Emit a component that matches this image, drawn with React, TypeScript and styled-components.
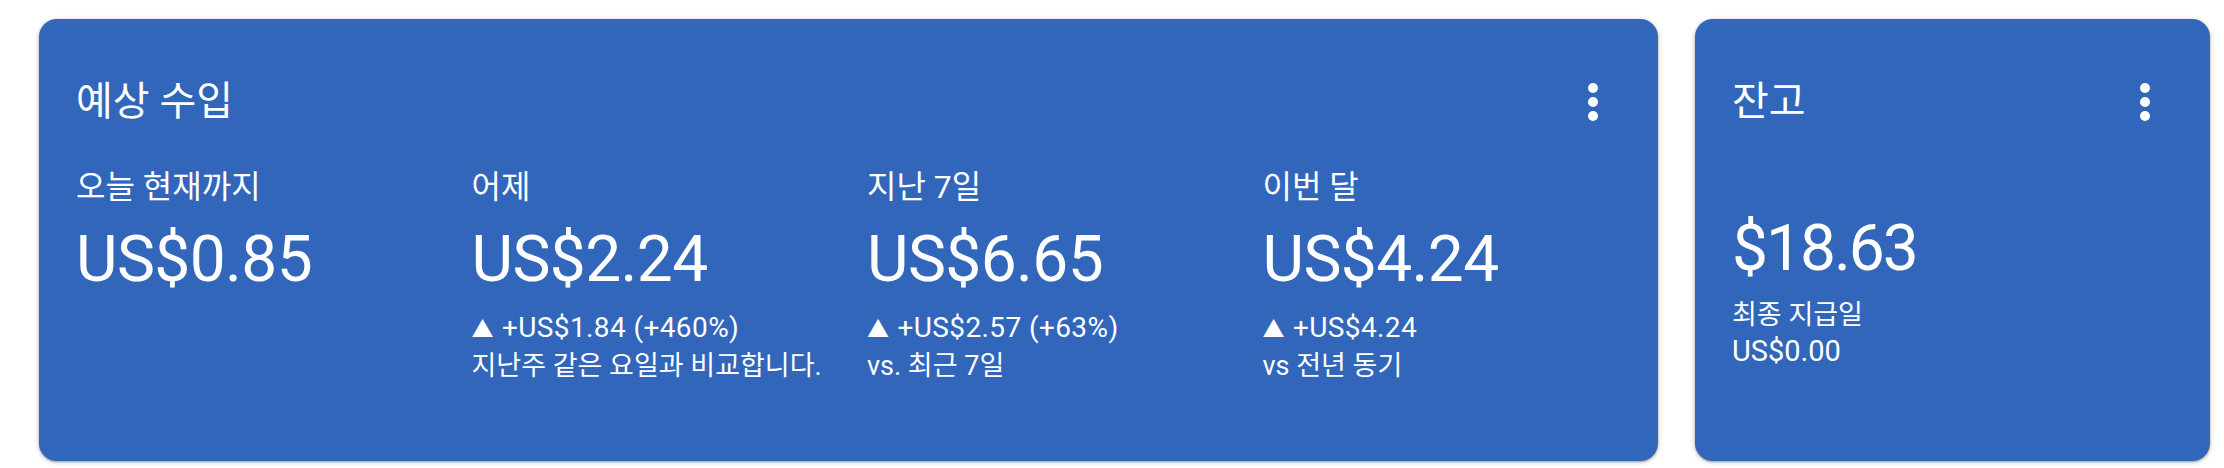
import React from "react";
import styled, { createGlobalStyle } from "styled-components";

const GlobalStyle = createGlobalStyle`
  html, body {
    margin: 0;
    padding: 0;
    background: #ffffff;
  }
  body {
    font-family: Roboto, "Noto Sans CJK KR", sans-serif;
    -webkit-font-smoothing: antialiased;
  }
`;

const Page = styled.div`
  display: flex;
  gap: 37px;
  padding: 19px 14px 7px 39px;
  width: 2224px;
  box-sizing: border-box;
`;

const Card = styled.section<{ $width?: number }>`
  flex: ${(p) => (p.$width ? `0 0 ${p.$width}px` : "1 1 auto")};
  height: 442px;
  box-sizing: border-box;
  background: #3166bb;
  border-radius: 18px;
  color: #ffffff;
  box-shadow: 0 1px 2px rgba(0, 0, 0, 0.3), 0 1px 4px 1px rgba(0, 0, 0, 0.15);
  display: flex;
  flex-direction: column;
  overflow: hidden;
`;

const Header = styled.header`
  display: flex;
  align-items: center;
  justify-content: space-between;
  padding: 53px 35px 0 37px;
  height: 60px;
  box-sizing: content-box;
`;

const Title = styled.h2`
  margin: 0;
  font-size: 40px;
  line-height: 48px;
  font-weight: 400;
`;

const MenuButton = styled.button`
  width: 60px;
  height: 60px;
  padding: 0;
  border: 0;
  background: transparent;
  color: #ffffff;
  display: flex;
  align-items: center;
  justify-content: center;
  cursor: pointer;
`;

const Stats = styled.div`
  display: grid;
  grid-template-columns: repeat(4, 1fr);
  padding-left: 37px;
  margin-top: 37px;
`;

const Stat = styled.div`
  display: flex;
  flex-direction: column;
`;

const Label = styled.div`
  font-size: 32px;
  line-height: 36px;
`;

const Amount = styled.div<{ $gap?: number; $tight?: boolean }>`
  font-size: 64px;
  line-height: 72px;
  letter-spacing: ${(p) => (p.$tight ? "-2px" : "-0.6px")};
  margin-top: ${(p) => p.$gap ?? 19}px;
`;

const Delta = styled.div`
  font-size: 28px;
  line-height: 36px;
  margin-top: 14px;
  letter-spacing: 0.4px;
`;

const Arrow = styled.span`
  font-size: 22px;
  margin-right: 8px;
`;

const Compare = styled.div`
  font-size: 27px;
  line-height: 36px;
`;

const BalanceBody = styled.div`
  display: flex;
  flex-direction: column;
  padding-left: 37px;
  margin-top: 81px;
`;

const Caption = styled.div<{ $size: number; $gap?: number }>`
  font-size: ${(p) => p.$size}px;
  line-height: 36px;
  margin-top: ${(p) => p.$gap ?? 0}px;
`;

const KebabIcon = () => (
  <svg width="60" height="60" viewBox="0 0 60 60" fill="currentColor" aria-hidden>
    <circle cx="30" cy="16" r="5" />
    <circle cx="30" cy="30" r="5" />
    <circle cx="30" cy="44" r="5" />
  </svg>
);

type StatData = {
  label: string;
  amount: string;
  delta?: string;
  compare?: string;
};

const stats: StatData[] = [
  { label: "오늘 현재까지", amount: "US$0.85" },
  {
    label: "어제",
    amount: "US$2.24",
    delta: "+US$1.84 (+460%)",
    compare: "지난주 같은 요일과 비교합니다.",
  },
  {
    label: "지난 7일",
    amount: "US$6.65",
    delta: "+US$2.57 (+63%)",
    compare: "vs. 최근 7일",
  },
  {
    label: "이번 달",
    amount: "US$4.24",
    delta: "+US$4.24",
    compare: "vs 전년 동기",
  },
];

export default function App() {
  return (
    <>
      <GlobalStyle />
      <Page>
        <Card>
          <Header>
            <Title>예상 수입</Title>
            <MenuButton aria-label="더보기">
              <KebabIcon />
            </MenuButton>
          </Header>
          <Stats>
            {stats.map((s) => (
              <Stat key={s.label}>
                <Label>{s.label}</Label>
                <Amount>{s.amount}</Amount>
                {s.delta && (
                  <Delta>
                    <Arrow>▲</Arrow>
                    {s.delta}
                  </Delta>
                )}
                {s.compare && <Compare>{s.compare}</Compare>}
              </Stat>
            ))}
          </Stats>
        </Card>
        <Card $width={515}>
          <Header>
            <Title>잔고</Title>
            <MenuButton aria-label="더보기">
              <KebabIcon />
            </MenuButton>
          </Header>
          <BalanceBody>
            <Amount $gap={0} $tight>
              $18.63
            </Amount>
            <Caption $size={27} $gap={12}>
              최종 지급일
            </Caption>
            <Caption $size={29}>US$0.00</Caption>
          </BalanceBody>
        </Card>
      </Page>
    </>
  );
}
